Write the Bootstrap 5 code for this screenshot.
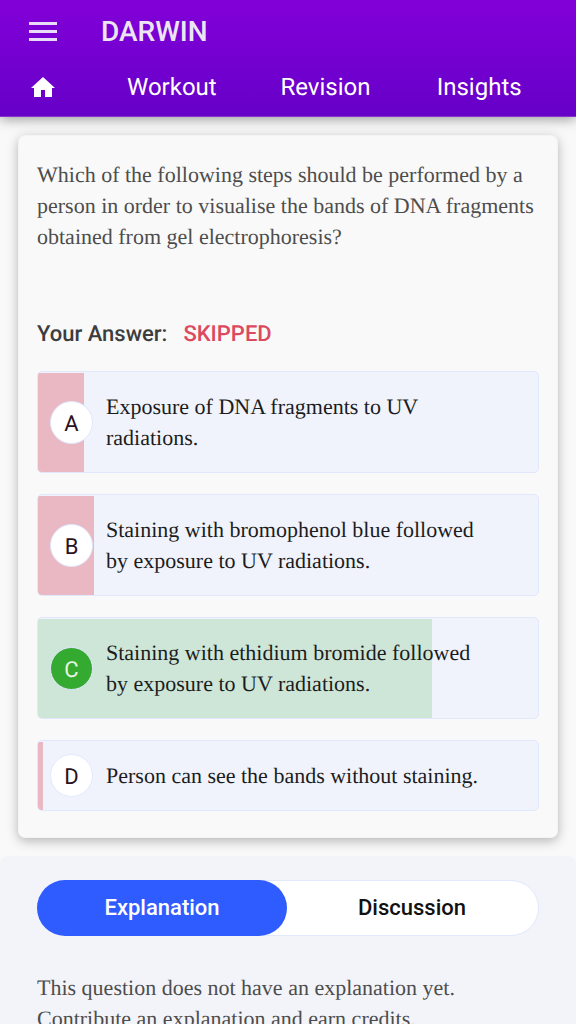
<!DOCTYPE html>
<html lang="en">
<head>
<meta charset="utf-8">
<meta name="viewport" content="width=device-width, initial-scale=1">
<title>Darwin</title>
<link href="https://cdn.jsdelivr.net/npm/bootstrap@5.3.0/dist/css/bootstrap.min.css" rel="stylesheet">
<style>
  body { background: #f9f9f9; font-family: Roboto, "Liberation Sans", sans-serif; text-rendering: geometricPrecision; }
  .topbar { background: linear-gradient(#8200d8, #6600c8); box-shadow: 0 2px 12px rgba(0,0,0,.4); padding: 11px 20px 6px 28px; border-bottom: 1px solid #8433cf; }
  .menu-btn { width: 30px; height: 42px; }
  .brand { font-size: 28px; line-height: 42px; font-weight: 500; color: #ebe6f2; margin-left: 43px; }
  .main-links { margin-top: 11px; padding-left: 3px; }
  .main-links a { color: #fff; font-size: 24px; line-height: 46px; text-decoration: none; }
  .home-link { margin-right: 40px; }
  .prose { font-family: "Liberation Serif", serif; font-size: 22px; line-height: 31px; }
  .question-card { margin: 18px; padding: 23px 18px 26px; background: #f9f9f9; border: 1px solid #f4f4f4; border-radius: 7px; box-shadow: 0 3px 12px rgba(0,0,0,.28); }
  .question-text, .note { color: #4d4d4d; }
  .question-text { margin-bottom: 67px; }
  .answer-line { font-size: 22px; line-height: 32px; font-weight: 500; color: #3d3d3d; gap: 16px; margin-bottom: 20px; }
  .skipped { color: #dc4a60; }
  .options { gap: 21px; }
  .option { background: #f0f3fb; border: 1px solid #e1e8fe; border-radius: 5px; padding: 19px 56px 19px 12px; gap: 13px; overflow: hidden; }
  .share { background: #e9b8c3; top: 1px; left: 0; bottom: 0; }
  .share-right { background: #cee6d7; }
  .letter { width: 43px; height: 43px; margin: -6px 0; border: 1px solid #e1e8fe; background: #fff; color: #2b121e; font-size: 22px; padding-top: 4px; }
  .letter-right { background: #35aa30; color: #e5f6e4; }
  .option .prose { color: #1c1c1e; }
  .details { background: #f3f4fa; border-radius: 8px 8px 0 0; padding: 24px 37px; }
  .tabs { background: #fff; border: 1px solid #e1e8fe; border-radius: 28px; margin-bottom: 36px; }
  .tabs .nav-link { font-size: 22px; line-height: 32px; font-weight: 500; color: #111; border-radius: 28px; padding: 12px 0; margin: -1px; }
  .tabs .nav-link.active { background: #2f5cff; color: #fff; }
</style>
</head>
<body>
<header class="topbar position-relative">
  <div class="d-flex align-items-center">
    <button class="menu-btn btn p-0 border-0 d-flex align-items-center" type="button" aria-label="Menu">
      <svg width="30" height="20" viewBox="0 0 30 20" fill="#e9dcf8"><path d="M1 0h28v3H1zM1 8h28v3H1zM1 16h28v3H1z"/></svg>
    </button>
    <span class="brand">DARWIN</span>
  </div>
  <nav class="main-links d-flex align-items-center" aria-label="Main">
    <a href="#" class="home-link d-flex" aria-label="Home"><svg width="24" height="20" viewBox="0 0 24 20" fill="#fff"><path d="M12 0 24 11h-3v9h-7v-7h-4v7H3v-9H0z"/></svg></a>
    <div class="row g-0 flex-grow-1 text-center">
      <div class="col"><a href="#">Workout</a></div>
      <div class="col"><a href="#">Revision</a></div>
      <div class="col"><a href="#">Insights</a></div>
    </div>
  </nav>
</header>
<main>
  <section class="question-card">
    <p class="question-text prose">Which of the following steps should be performed by a person in order to visualise the bands of DNA fragments obtained from gel electrophoresis?</p>
    <div class="answer-line d-flex"><span>Your Answer:</span><span class="skipped">SKIPPED</span></div>
    <ul class="options list-unstyled d-flex flex-column mb-0">
      <li class="option position-relative d-flex align-items-center">
        <span class="share position-absolute" style="width:9.2%"></span>
        <span class="letter rounded-circle d-flex flex-shrink-0 align-items-center justify-content-center position-relative">A</span>
        <span class="prose position-relative">Exposure of DNA fragments to UV radiations.</span>
      </li>
      <li class="option position-relative d-flex align-items-center">
        <span class="share position-absolute" style="width:11.1%"></span>
        <span class="letter rounded-circle d-flex flex-shrink-0 align-items-center justify-content-center position-relative">B</span>
        <span class="prose position-relative">Staining with bromophenol blue followed by exposure to UV radiations.</span>
      </li>
      <li class="option position-relative d-flex align-items-center">
        <span class="share share-right position-absolute" style="width:78.8%"></span>
        <span class="letter letter-right rounded-circle d-flex flex-shrink-0 align-items-center justify-content-center position-relative">C</span>
        <span class="prose position-relative">Staining with ethidium bromide followed by exposure to UV radiations.</span>
      </li>
      <li class="option position-relative d-flex align-items-center">
        <span class="share position-absolute" style="width:1%"></span>
        <span class="letter rounded-circle d-flex flex-shrink-0 align-items-center justify-content-center position-relative">D</span>
        <span class="prose position-relative">Person can see the bands without staining.</span>
      </li>
    </ul>
  </section>
  <section class="details">
    <div class="tabs nav nav-pills nav-justified" role="tablist">
      <div class="nav-item" role="presentation"><button class="nav-link active" type="button" role="tab" aria-selected="true">Explanation</button></div>
      <div class="nav-item" role="presentation"><button class="nav-link" type="button" role="tab" aria-selected="false">Discussion</button></div>
    </div>
    <p class="note prose mb-0">This question does not have an explanation yet.<br>Contribute an explanation and earn credits.</p>
  </section>
</main>
<script src="https://cdn.jsdelivr.net/npm/bootstrap@5.3.0/dist/js/bootstrap.bundle.min.js"></script>
</body>
</html>
